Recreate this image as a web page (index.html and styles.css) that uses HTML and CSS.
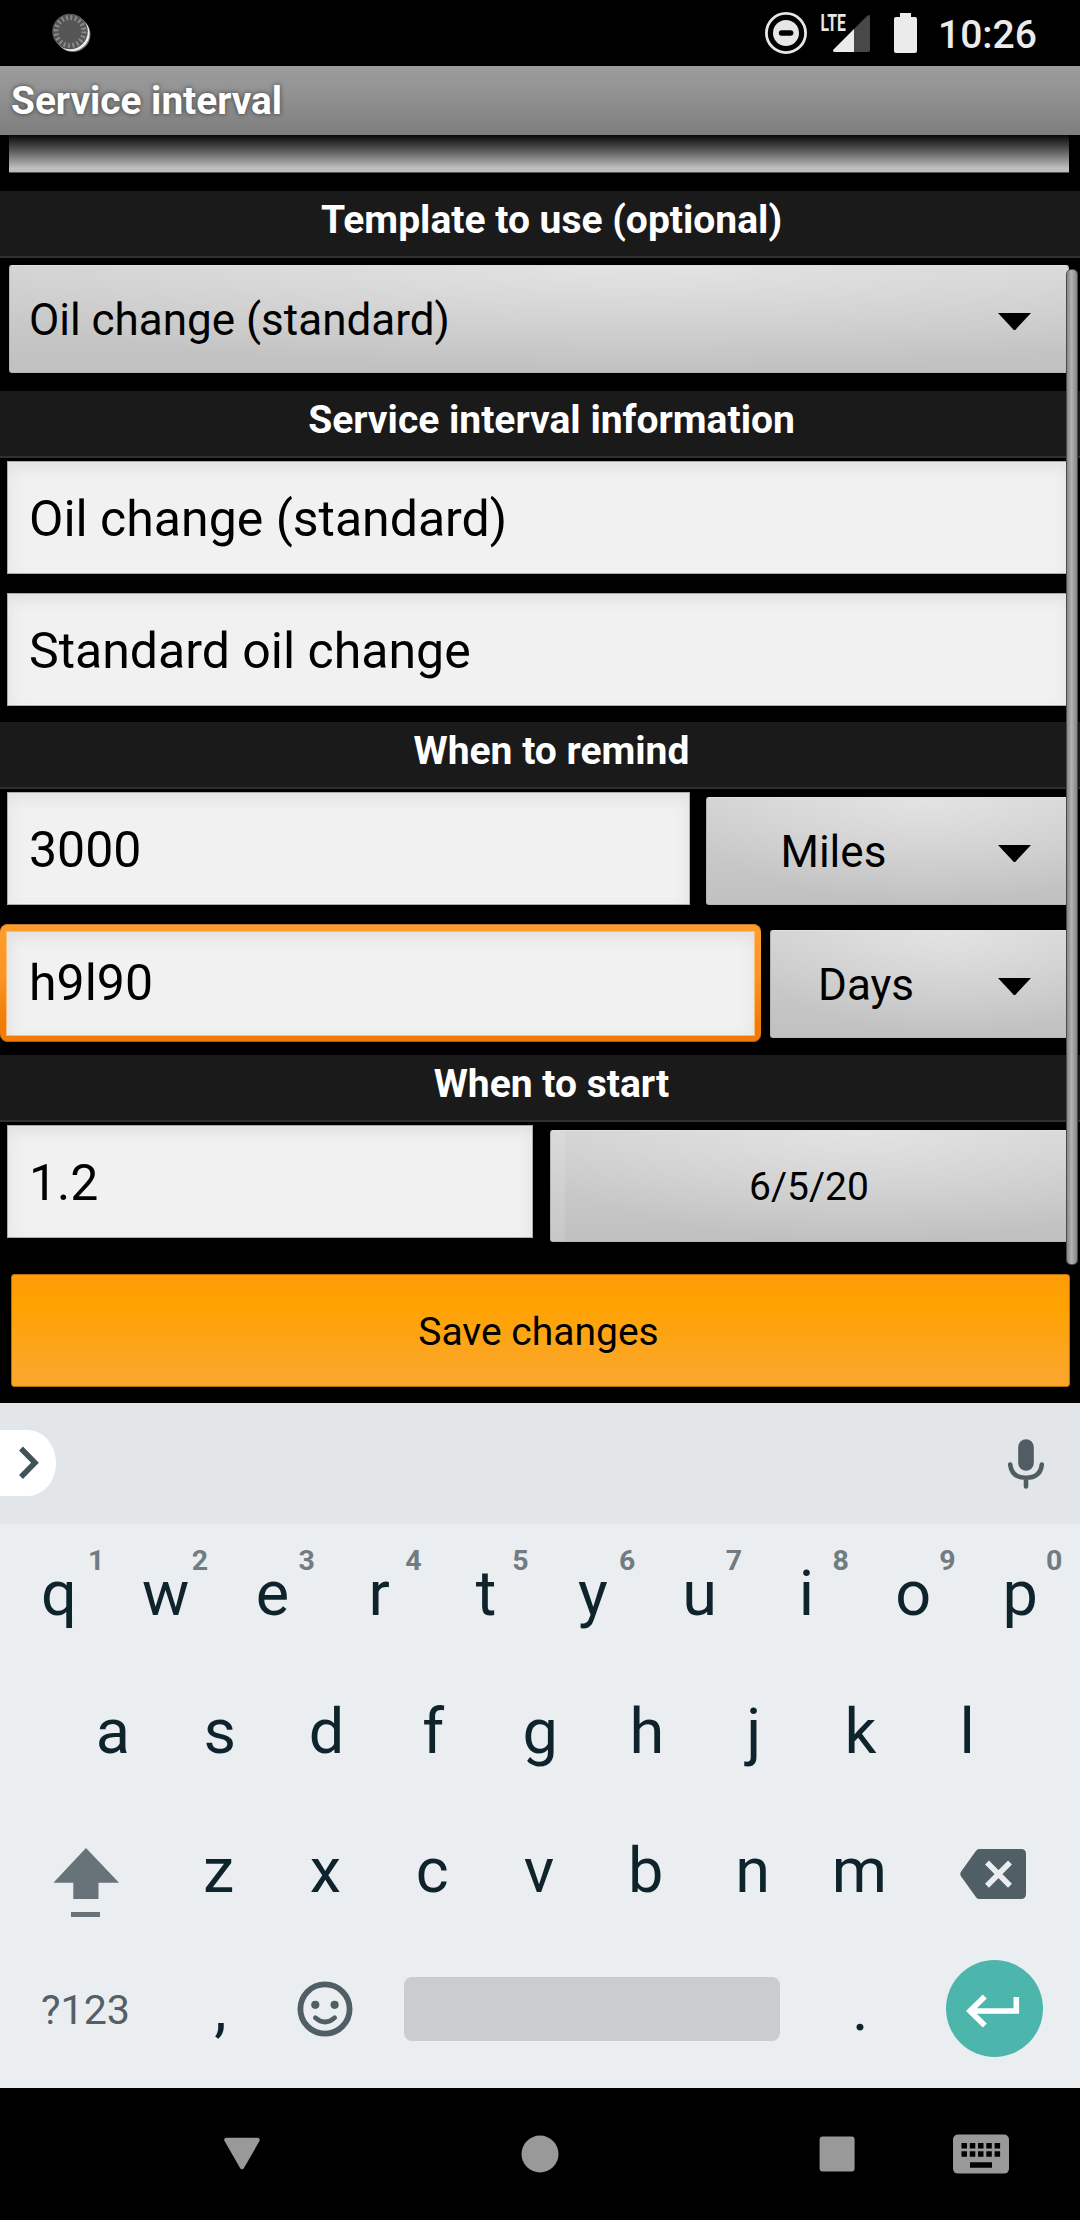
FILE: index.html
```html
<!DOCTYPE html>
<html lang="en">
<head>
<meta charset="utf-8">
<title>Service interval</title>
<link rel="stylesheet" href="styles.css">
</head>
<body>
<div class="screen">
  <header class="status">
    <svg class="sync" width="44" height="44" viewBox="0 0 44 44">
      <circle cx="25" cy="24.5" r="17.5" fill="#777"/>
      <circle cx="24" cy="23.5" r="17.5" fill="#f0f0f0"/>
      <circle cx="22" cy="21.5" r="17.8" fill="#555"/>
      <circle cx="22" cy="21.5" r="14" fill="none" stroke="#8c8c8c" stroke-width="5" stroke-dasharray="1.8 2.6"/>
    </svg>
    <div class="status-right">
      <svg width="42" height="42" viewBox="0 0 42 42">
        <circle cx="21" cy="21" r="19.6" fill="none" stroke="#e6e6e6" stroke-width="2.8"/>
        <circle cx="21" cy="21" r="13" fill="#e6e6e6"/>
        <rect x="13.8" y="18.2" width="14.6" height="5.6" rx="2.8" fill="#000"/>
      </svg>
      <svg class="signal" width="50" height="52" viewBox="0 -10 50 52">
        <path d="M33 18 47 4Q50 1.500 50 5V38Q50 40 48 40H33Z" fill="#484848"/>
        <path d="M34 17V40H15Q12 40 13.500 37.500Z" fill="#ebebeb"/>
        <text class="lte" x="0.5" y="19" textLength="25.500" lengthAdjust="spacingAndGlyphs">LTE</text>
      </svg>
      <svg class="battery" width="23" height="40" viewBox="0 0 23 40">
        <path d="M6 0H17V4H21Q23 4 23 6V38Q23 40 21 40H2Q0 40 0 38V6Q0 4 2 4H6Z" fill="#ebebeb"/>
      </svg>
      <span class="time">10:26</span>
    </div>
  </header>
  <div class="titlebar">Service interval</div>

  <main class="form">
    <div class="cut-button"></div>
    <h2 class="section">Template to use (optional)</h2>
    <div class="spinner wide"><span>Oil change (standard)</span><i class="caret"></i></div>
    <h2 class="section">Service interval information</h2>
    <div class="field">Oil change (standard)</div>
    <div class="field second">Standard oil change</div>
    <h2 class="section s3">When to remind</h2>
    <div class="row distance">
      <div class="field">3000</div>
      <div class="spinner miles"><span>Miles</span><i class="caret"></i></div>
    </div>
    <div class="row period">
      <div class="focus"><div class="focus-inner">h9l90</div></div>
      <div class="spinner days"><span>Days</span><i class="caret"></i></div>
    </div>
    <h2 class="section s4">When to start</h2>
    <div class="row start">
      <div class="field">1.2</div>
      <div class="date">6/5/20</div>
    </div>
    <div class="scrollbar"></div>
  </main>
  <div class="actions"><div class="save">Save changes</div></div>

  <section class="keyboard">
    <div class="strip">
      <div class="expand">
        <svg width="56" height="66" viewBox="0 0 56 66"><path d="M21 18.500 35 32.700 21 47" fill="none" stroke="#42525b" stroke-width="5.500"/></svg>
      </div>
      <svg width="36" height="50" viewBox="0 0 36 50">
        <rect x="10.200" y="0.300" width="15.600" height="31.400" rx="7.800" fill="#505e64"/>
        <path d="M2.200 25.500Q3.500 38.800 18 38.800T33.800 25.500M18 39V47.500" fill="none" stroke="#505e64" stroke-width="4.600" stroke-linecap="round"/>
      </svg>
    </div>
    <div class="keys k1">
      <span>q<b class="one">1</b></span><span>w<b>2</b></span><span>e<b>3</b></span><span>r<b>4</b></span><span>t<b>5</b></span><span>y<b>6</b></span><span>u<b>7</b></span><span>i<b>8</b></span><span>o<b>9</b></span><span>p<b>0</b></span>
    </div>
    <div class="keys k2">
      <span>a</span><span>s</span><span>d</span><span>f</span><span>g</span><span>h</span><span>j</span><span>k</span><span>l</span>
    </div>
    <div class="keys k3">
      <svg class="shift" width="66" height="70" viewBox="0 0 66 70" fill="#677379"><path d="M33 0 66 34.700H45.500V51H20.300V34.700H0.400Z"/><path d="M18 64H47V69H18Z"/></svg>
      <div class="letters"><span>z</span><span>x</span><span>c</span><span>v</span><span>b</span><span>n</span><span>m</span></div>
      <svg class="erase" width="66" height="50" viewBox="0 0 66 50"><path d="M19 0H61Q66 0 66 5V45Q66 50 61 50H19Q17 50 15.500 47.500L0.800 27Q-0.200 25 0.800 23L15.500 2.500Q17 0 19 0Z" fill="#505e66"/><path d="M27 13.500 50 36.800M50 13.500 27 36.800" stroke="#ebeef1" stroke-width="5.500"/></svg>
    </div>
    <div class="keys k4">
      <span class="sym">?123</span>
      <span class="punct">,</span>
      <svg class="emoji" width="56" height="56" viewBox="0 0 56 56">
        <circle cx="28" cy="28" r="24.600" fill="none" stroke="#505e66" stroke-width="5.800"/>
        <circle cx="18.300" cy="23.800" r="4.100" fill="#505e66"/><circle cx="37.600" cy="23.800" r="4.100" fill="#505e66"/>
        <path d="M18.300 36.800Q28 45.200 37.700 36.800" fill="none" stroke="#505e66" stroke-width="4.600" stroke-linecap="round"/>
      </svg>
      <div class="space"></div>
      <span class="punct">.</span>
      <div class="enter"><svg width="97" height="97" viewBox="0 0 97 97"><path d="M38.800 36.500 24 51 38.800 65.500M24 51H70.300V37" fill="none" stroke="#fff" stroke-width="5.600"/></svg></div>
    </div>
  </section>

  <nav class="navbar">
    <svg width="38" height="38" viewBox="0 0 38 38"><path d="M3.500 5H34.500L19 32Z" fill="#999" stroke="#999" stroke-width="4.500" stroke-linejoin="round"/></svg>
    <svg width="38" height="38" viewBox="0 0 38 38"><circle cx="19" cy="19" r="18.500" fill="#999"/></svg>
    <svg width="36" height="36" viewBox="0 0 36 36"><rect x="0.600" y="0.400" width="35" height="35.200" rx="3" fill="#999"/></svg>
    <svg width="56" height="40" viewBox="0 0 56 40">
      <rect y="0.600" width="56" height="39" rx="5" fill="#999"/>
      <path d="M8.500 11.800H14M16.800 11.800H22.300M25 11.800H30.500M33.300 11.800H38.800M41.600 11.800H47.100M8.500 20H14M16.800 20H22.300M25 20H30.500M33.300 20H38.800M41.600 20H47.100M17 31H39" stroke="#000" stroke-width="5.500"/>
    </svg>
  </nav>
</div>
</body>
</html>
```
FILE: styles.css
```css
* { box-sizing: border-box; }
body { margin: 0; background: #000; }
svg { display: block; flex: none; }

.screen {
  width: 1080px;
  height: 2220px;
  display: flex;
  flex-direction: column;
  background: #000;
  font-family: Roboto, sans-serif;
  font-size: 39px;
  color: #000;
  overflow: hidden;
}
.screen > * { flex: none; }

/* Status bar */
.status {
  height: 66px;
  display: flex;
  justify-content: space-between;
  align-items: flex-start;
  padding: 10px 0 0 48px;
}
.status-right {
  display: flex;
  align-items: center;
  width: 315px;
  height: 46px;
}
.signal { margin: -10px 0 0 13px; }
.lte { font-size: 23.5px; font-weight: 700; fill: #e6e6e6; }
.battery { margin-left: 24px; }
.time { margin-left: 21px; padding-top: 4px; font-weight: 500; color: #ebebeb; line-height: 46px; }

.titlebar {
  height: 69px;
  padding: 1px 0 0 11px;
  line-height: 68px;
  font-size: 38.8px;
  font-weight: 700;
  color: #fff;
  background: linear-gradient(#9c9c9c, #959595 30%, #7e7e7e);
  text-shadow: 0 0 5px rgba(0, 0, 0, .6);
}

/* Form */
.form {
  position: relative;
  height: 1131px;
  display: flex;
  flex-direction: column;
}
.form > * { flex: none; }
.cut-button {
  height: 38px;
  margin: 0 11px 18px 9px;
  background: linear-gradient(#080808, #555 40%, #c0c0c0 90%, #bbb);
  border-bottom: 1px solid #555;
}
.section {
  height: 67px;
  margin: 0 0 7px;
  padding-left: 23px;
  font-size: 39px;
  line-height: 58px;
  font-weight: 700;
  text-align: center;
  color: #fff;
  background: #1a1a1a;
  border-bottom: 2px solid #303030;
}
.spinner, .date {
  background:
    radial-gradient(ellipse 70% 100% at 60% 0, rgba(255, 255, 255, .38), rgba(255, 255, 255, 0)),
    linear-gradient(#d2d2d2, #c0c0c0);
  border: 1px solid #b4b4b4;
  border-top-color: #e0e0e0;
  border-radius: 3px;
}
.spinner {
  height: 108px;
  display: flex;
  align-items: center;
  justify-content: space-between;
  padding: 2px 37px 0 19px;
  font-size: 44px;
}
.wide { margin: 0 11px 18px 9px; }
.caret {
  width: 33px;
  height: 17px;
  margin-top: 3px;
  background: #000;
  clip-path: polygon(0 0, 100% 0, 52% 100%, 48% 100%);
}
.field {
  height: 113px;
  display: flex;
  align-items: center;
  margin: 0 11px 0 7px;
  padding: 2px 0 0 21px;
  font-size: 50px;
  background: #f1f1f1;
  border: 1px solid #aaa;
  box-shadow: inset 0 12px 14px -6px #e0e0e0, inset 10px 0 14px -6px #e8e8e8, inset -10px 0 14px -6px #e8e8e8, inset 0 0 0 1px #fafafa;
}
.wide + .section { margin-bottom: 3px; }
.second { margin-top: 19px; margin-bottom: 16px; }
.s3, .s4 { margin-bottom: 3px; }
.row { display: flex; align-items: flex-end; }
.row .field { margin: 0; flex: none; }
.distance { padding: 0 11px 0 7px; gap: 16px; margin-bottom: 19px; }
.distance .field { width: 683px; }
.miles, .days { flex: 1; }
.miles { padding-left: 73.5px; }
.period { height: 118px; padding-right: 11px; gap: 9px; align-items: center; margin-bottom: 13px; }
.focus {
  width: 761px;
  height: 118px;
  padding: 8px 7px 7px;
  border-radius: 8px;
  background: linear-gradient(#ff9d2c, #fb9522 45%, #f17a08 85%);
  box-shadow: inset 0 1px 0 #c27a2a, inset 0 -1px 0 #b05c0a;
}
.focus-inner {
  height: 103px;
  display: flex;
  align-items: center;
  padding: 0 0 1px 22px;
  font-size: 50px;
  background: #f1f1f1;
  box-shadow: inset 0 12px 14px -6px #e0e0e0, inset 10px 0 14px -6px #e4e4e4, inset -10px 0 14px -6px #e8e8e8, 0 0 0 1px #f8bd78;
}
.days { margin-top: 2px; padding-left: 47px; }
.start { align-items: flex-start; padding: 0 11px 0 7px; gap: 17px; }
.start .field { width: 526px; }
.date {
  position: relative;
  flex: 1;
  height: 112px;
  margin-top: 5px;
  padding: 1px 1px 0 0;
  line-height: 110px;
  text-align: center;
}
.date::before {
  content: "";
  position: absolute;
  inset: 0 auto 0 0;
  width: 14px;
  background: rgba(255, 255, 255, .13);
}
.scrollbar {
  position: absolute;
  left: 1066px;
  top: 134px;
  width: 12px;
  height: 996px;
  border-radius: 5px;
  border: 1px solid #4a4a4a;
  background: linear-gradient(90deg, #858585, #b2b2b2 45%, #858585);
}

.actions { height: 137px; padding: 8px 10px 16px 11px; }
.save {
  height: 113px;
  padding: 1px 4px 0 0;
  line-height: 112px;
  text-align: center;
  background: linear-gradient(#ff9c08, #ffa200 25%, #fba628 85%);
  border: 1px solid #b0700c;
  border-radius: 3px;
}

/* Keyboard */
.keyboard { height: 685px; background: #ebeef1; color: #0f232c; font-size: 63px; }
.strip {
  height: 121px;
  display: flex;
  align-items: center;
  justify-content: space-between;
  padding-right: 36px;
  background: #e2e6e9;
}
.expand { height: 66px; margin-bottom: 1px; border-radius: 0 28px 28px 0 / 0 33px 33px 0; background: #fff; }
.keys { height: 138.5px; display: flex; }
.keys span { position: relative; width: 106.8px; text-align: center; line-height: 139px; }
.keys b {
  position: absolute;
  top: 19px;
  right: 11px;
  font-size: 28.5px;
  line-height: 36px;
  color: #707c82;
}
.keys .one { right: 8px; }
.k1 { padding-left: 5.5px; }
.k2 { padding-left: 59.5px; }
.k2 span { line-height: 137px; }
.k3 { padding: 0 54px 0 53px; justify-content: space-between; }
.letters { display: flex; margin-right: 47px; margin-left: 46px; }
.shift { margin-top: 47px; }
.erase { margin-top: 48px; }
.k4 { height: 148.5px; align-items: flex-start; }
.keys .sym { width: 171px; font-size: 41.25px; color: #546067; line-height: 141px; }
.k4 .punct { margin: -1px -3px 0 -4px; }
.emoji { margin: 41px 0 0 26px; }
.space { width: 376px; height: 64px; margin: 37px 30.5px 0 51.5px; border-radius: 8px; background: #c9cdd0; }
.enter { width: 97px; height: 97px; margin: 20px 0 0 35px; border-radius: 50%; background: #4db6ac; }

.navbar { height: 132px; display: flex; align-items: center; padding-left: 223px; }
.navbar svg:nth-child(2) { margin-left: 260px; }
.navbar svg:nth-child(3) { margin-left: 260px; }
.navbar svg:nth-child(4) { margin-left: 98px; }
```
